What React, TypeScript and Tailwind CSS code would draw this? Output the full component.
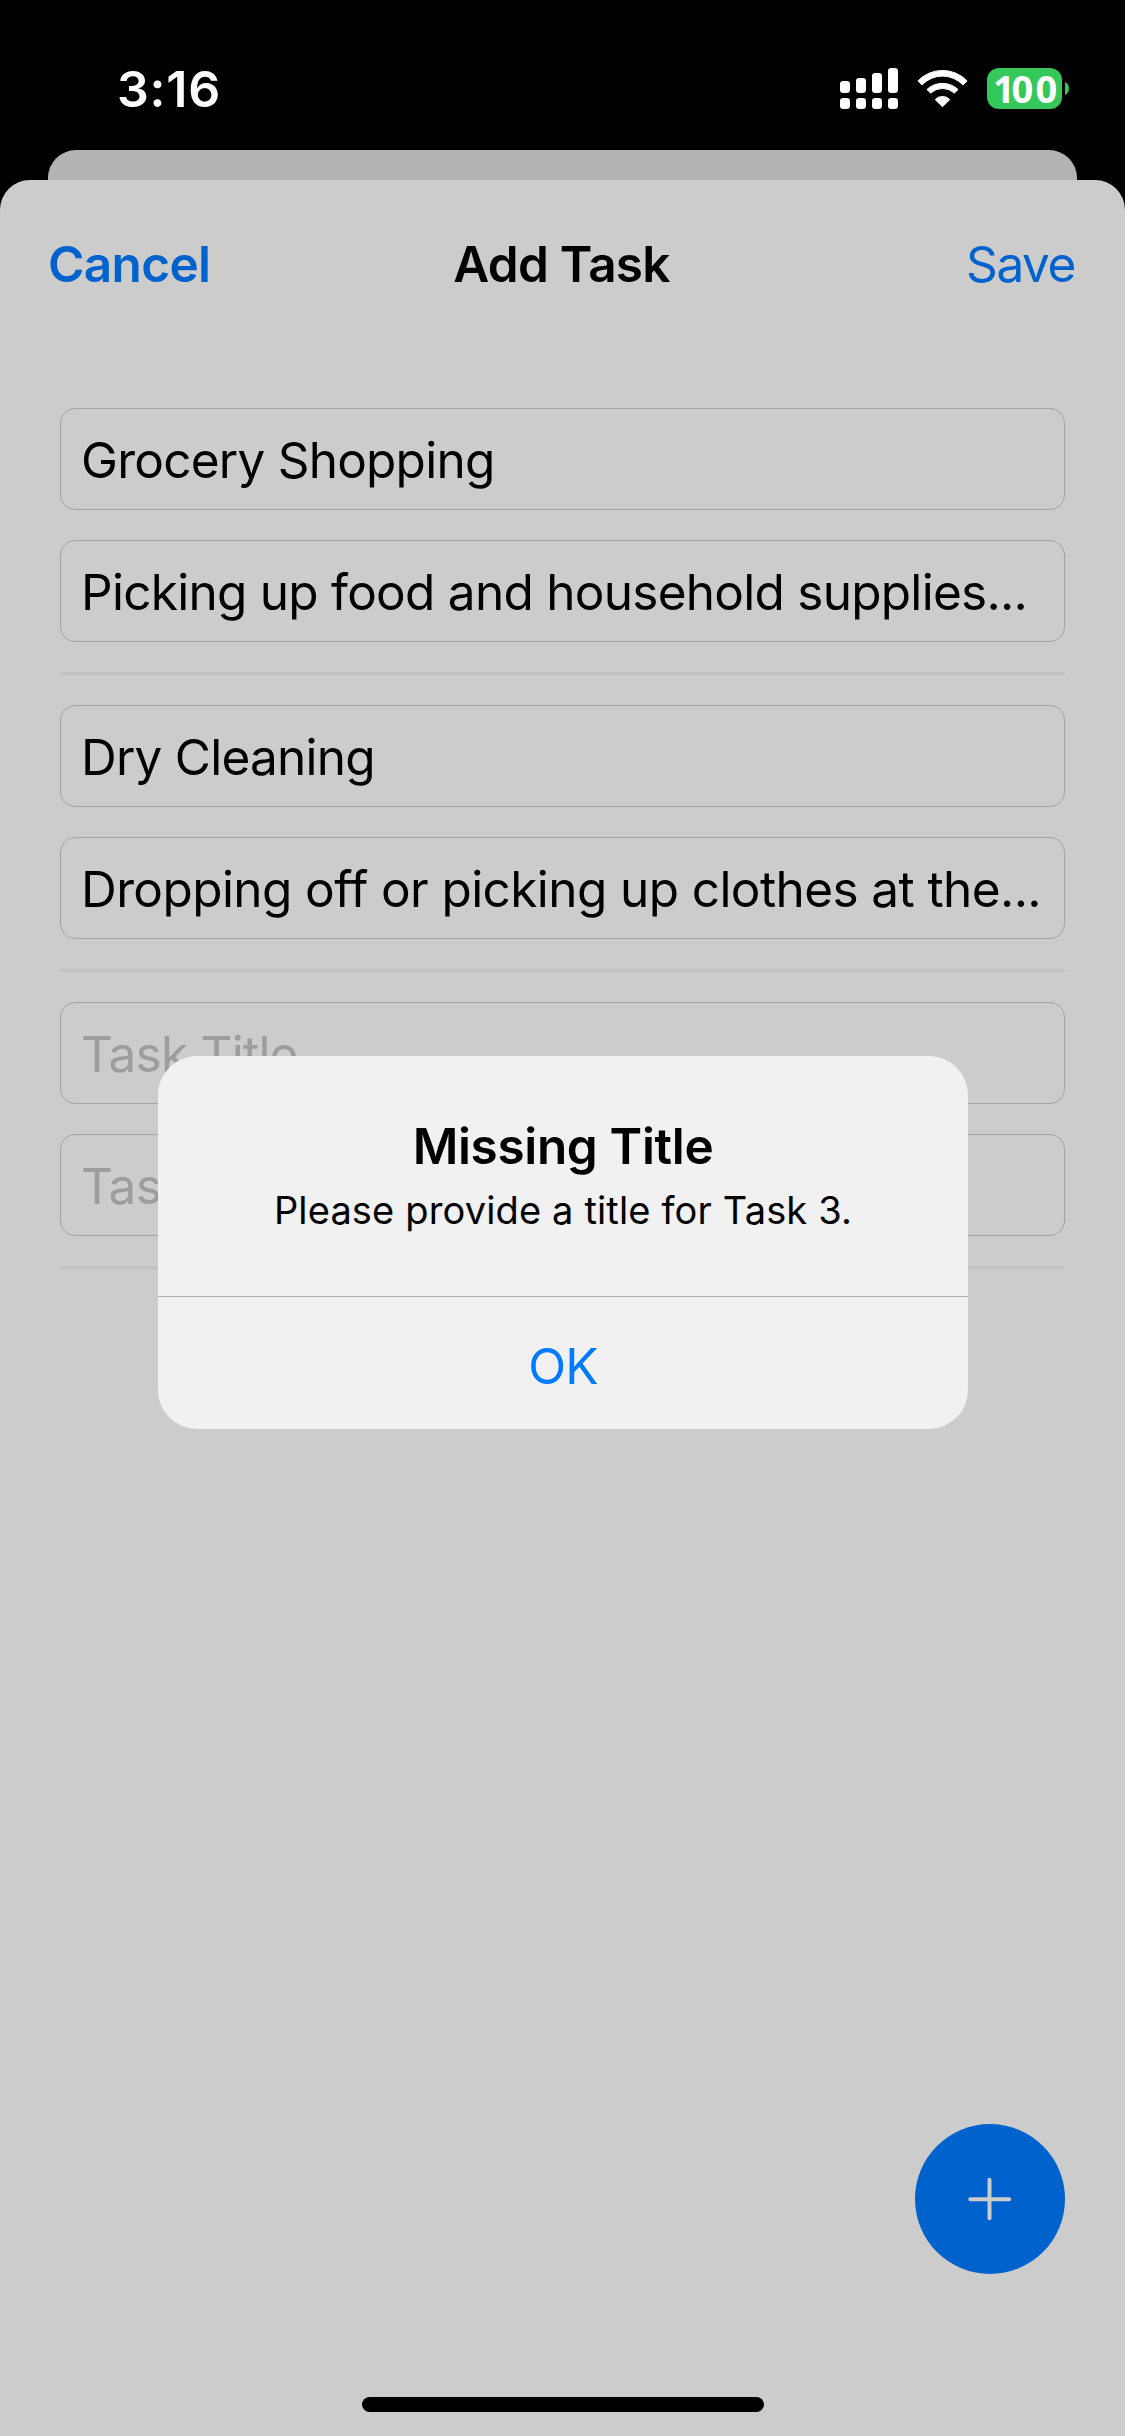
interface Task {
  title?: string;
  description?: string;
}

const TASKS: Task[] = [
  {
    title: 'Grocery Shopping',
    description: 'Picking up food and household supplies...',
  },
  {
    title: 'Dry Cleaning',
    description: 'Dropping off or picking up clothes at the...',
  },
  {},
];

function SignalIcon() {
  const bars = [
    { x: 0, top: 13 },
    { x: 16, top: 10 },
    { x: 32, top: 5 },
    { x: 48, top: 0 },
  ];
  return (
    <svg width="58" height="41" viewBox="0 0 58 41" fill="white">
      {bars.map((bar) => (
        <g key={bar.x}>
          <rect x={bar.x} y={bar.top} width="10" height={25 - bar.top} rx="3.2" />
          <rect x={bar.x} y="30" width="10" height="11" rx="3.2" />
        </g>
      ))}
    </svg>
  );
}

function WifiIcon() {
  return (
    <svg width="51" height="39" viewBox="0 0 51 39" fill="white" stroke="white" strokeWidth="1" strokeLinejoin="round">
      <path d="M0.9 11.9A34.1 34.1 0 0 1 50.1 11.9L46 15.9A28.3 28.3 0 0 0 5 15.9Z" />
      <path d="M9.9 20.5A22.9 22.9 0 0 1 41.1 20.5L37.3 24.1A17.3 17.3 0 0 0 13.7 24.1Z" />
      <path d="M18.2 30.6A10 10 0 0 1 32.8 30.6L25.5 37.7Z" />
    </svg>
  );
}

function Battery() {
  return (
    <div className="flex items-center gap-[3px]">
      <div className="flex h-[41px] w-[75px] items-center rounded-[12px] bg-[#34c759] pl-[6px] font-['Open_Sans',sans-serif] text-[38px] leading-[41px] font-bold whitespace-nowrap text-white">
        <p className="tracking-[2.3px]">
          <span className="tracking-[-3.2px]">1</span>00
        </p>
      </div>
      <svg width="4" height="13" viewBox="0 0 4 13" fill="#34c759">
        <path d="M0 0C2.4 1 4 3.4 4 6.5S2.4 12 0 13Z" />
      </svg>
    </div>
  );
}

function StatusBar() {
  return (
    <div className="flex h-[150px] shrink-0 justify-between pr-14 pl-[117px]">
      <div className="pt-[59px] text-[50px] leading-[60px] font-semibold tracking-[0.8px] text-white">3:16</div>
      <div className="flex pt-[68px]">
        <SignalIcon />
        <div className="ml-[19px] pt-px">
          <WifiIcon />
        </div>
        <div className="ml-[19px]">
          <Battery />
        </div>
      </div>
    </div>
  );
}

function Field({ value, placeholder, tracking = 'tracking-[-0.76px]' }: { value?: string; placeholder: string; tracking?: string }) {
  return (
    <div className="flex h-[102px] items-center rounded-[15px] border border-[#a3a3a3] pt-[2px] pl-5">
      <span className={`text-[49.5px] leading-[60px] whitespace-nowrap ${tracking} ${value ? 'text-black' : 'text-[#9d9d9e]'}`}>
        {value ?? placeholder}
      </span>
    </div>
  );
}

export default function App() {
  return (
    <div className="relative flex h-[2436px] w-[1125px] flex-col overflow-hidden bg-black font-['Inter',sans-serif]">
      <StatusBar />
      <div className="mx-12 h-[30px] shrink-0 rounded-t-[28px] bg-[#b3b3b3]" />

      <div className="flex flex-1 flex-col rounded-t-[30px] bg-[#cccccc]">
        <header className="grid h-[168px] shrink-0 grid-cols-3 items-center pr-[50px] pl-12 text-[49.5px] leading-[60px] whitespace-nowrap">
          <button className="text-left font-semibold tracking-[-0.66px] text-[#0062cc]">Cancel</button>
          <h1 className="text-center font-semibold tracking-[-0.74px] text-black">Add Task</h1>
          <button className="text-right tracking-[-1.4px] text-[#0062cc]">Save</button>
        </header>

        <main className="flex flex-col gap-[30px] px-[60px] pt-[60px]">
          {TASKS.map((task, i) => (
            <section key={i} className="flex flex-col gap-[30px]">
              <Field value={task.title} placeholder="Task Title" />
              <Field
                value={task.description}
                placeholder="Task Description"
                tracking={i === 1 ? 'tracking-[-0.59px]' : 'tracking-[-0.73px]'}
              />
              <div className="h-[3px] bg-[#c1c1c1]" />
            </section>
          ))}
        </main>

        <button className="mt-auto mr-[60px] flex size-[150px] shrink-0 items-center justify-center self-end rounded-full bg-[#0062cc]">
          <svg width="44" height="44" viewBox="0 0 44 44" fill="none" stroke="#cccccc" strokeWidth="4" strokeLinecap="round">
            <path d="M21.5 2.8V41.2M2.3 22.3H41.2" />
          </svg>
        </button>
        <div className="mx-auto mt-[123px] mb-6 h-[15px] w-[402px] shrink-0 rounded-full bg-black" />
      </div>

      <div className="absolute top-[1056px] left-[158px] flex h-[373px] w-[810px] flex-col rounded-[39px] bg-[#f1f1f1] text-center text-black">
        <div className="h-[240px] pt-[60px]">
          <h2 className="text-[49.5px] leading-[60px] font-semibold tracking-[-0.34px]">Missing Title</h2>
          <p className="pt-[9px] text-[38px] leading-[50px] tracking-[0.15px]">Please provide a title for Task 3.</p>
        </div>
        <div className="h-px bg-[#b0b0b1]" />
        <button className="flex-1 pt-1.5 text-[49.5px] leading-[60px] tracking-[-0.85px] text-[#007aff]">OK</button>
      </div>
    </div>
  );
}
